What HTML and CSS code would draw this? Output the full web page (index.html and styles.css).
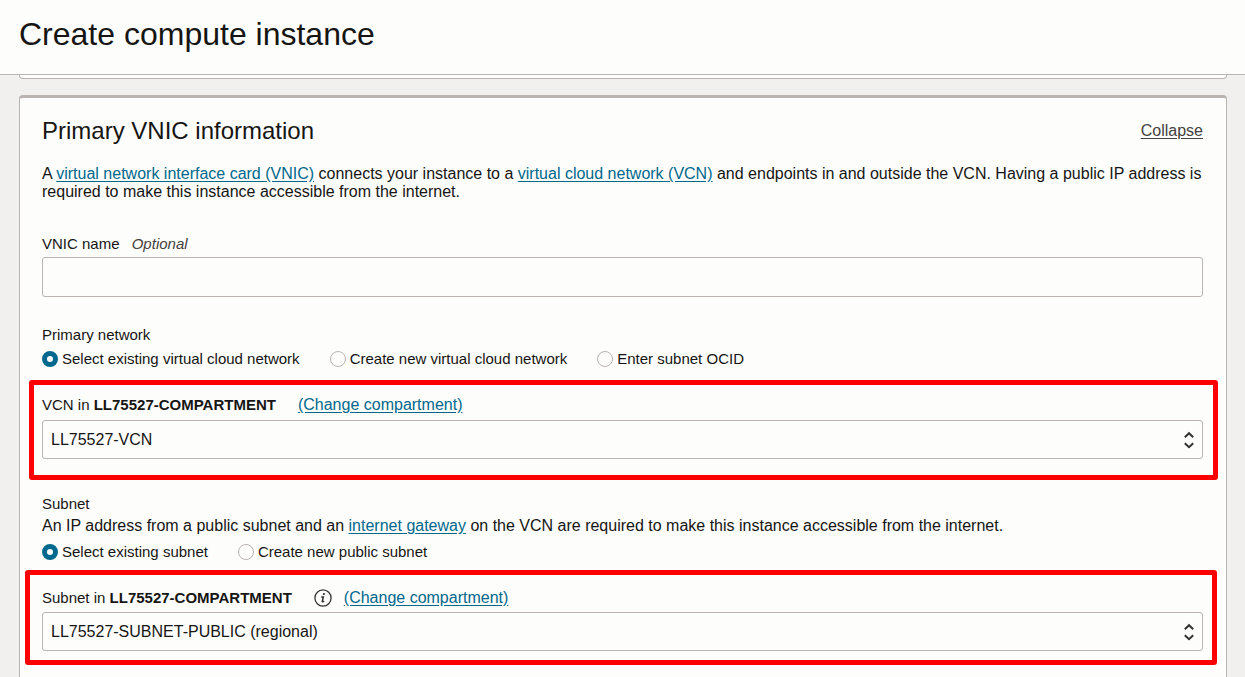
FILE: index.html
```html
<!DOCTYPE html>
<html lang="en">
<head>
<meta charset="utf-8">
<title>Create compute instance</title>
<link rel="stylesheet" href="styles.css">
</head>
<body>
<header class="page-header">
  <h1 class="page-title">Create compute instance</h1>
</header>
<main class="content">
  <section class="previous-panel" aria-hidden="true"></section>
  <form class="panel">
    <div class="panel-heading">
      <h2 class="panel-title">Primary VNIC information</h2>
      <a class="collapse" href="#">Collapse</a>
    </div>
    <p class="intro">A <a href="#">virtual network interface card (VNIC)</a> connects your instance to a <a href="#">virtual cloud network (VCN)</a> and endpoints in and outside the VCN. Having a public IP address is required to make this instance accessible from the internet.</p>

    <div class="field field-name">
      <label class="label" for="vnic-name">VNIC name <em class="optional">Optional</em></label>
      <input class="control" id="vnic-name" type="text">
    </div>

    <fieldset class="group">
      <legend class="label">Primary network</legend>
      <div class="options">
        <label class="option"><input class="radio" type="radio" name="network" checked>Select existing virtual cloud network</label>
        <label class="option"><input class="radio" type="radio" name="network">Create new virtual cloud network</label>
        <label class="option"><input class="radio" type="radio" name="network">Enter subnet OCID</label>
      </div>
    </fieldset>

    <div class="field field-vcn">
      <div class="label-row">
        <label class="label" for="vcn">VCN in <strong>LL75527-COMPARTMENT</strong></label>
        <a href="#">(Change compartment)</a>
      </div>
      <div class="select-wrap">
        <select class="control select" id="vcn"><option>LL75527-VCN</option></select>
        <svg class="chevrons" viewBox="0 0 12 18" aria-hidden="true"><path d="M1.8 6.2 6 2.2l4.2 4M1.8 12.2l4.2 4 4.2-4"/></svg>
      </div>
      <div class="highlight highlight-vcn"></div>
    </div>

    <fieldset class="group group-subnet">
      <legend class="label">Subnet</legend>
      <p class="hint">An IP address from a public subnet and an <a href="#">internet gateway</a> on the VCN are required to make this instance accessible from the internet.</p>
      <div class="options">
        <label class="option"><input class="radio" type="radio" name="subnet" checked>Select existing subnet</label>
        <label class="option"><input class="radio" type="radio" name="subnet">Create new public subnet</label>
      </div>
    </fieldset>

    <div class="field field-subnet">
      <div class="label-row">
        <label class="label" for="subnet">Subnet in <strong>LL75527-COMPARTMENT</strong></label>
        <button class="info" type="button" aria-label="More information">
          <svg viewBox="0 0 18 18" aria-hidden="true"><circle cx="9" cy="9" r="8.1" fill="none" stroke="#333" stroke-width="1.3"/><circle cx="9.9" cy="5" r="1.1" fill="#333"/><path d="M7.2 8h2.1l-1.1 4.6q0 .5 2-.5" fill="none" stroke="#333" stroke-width="1.5"/></svg>
        </button>
        <a href="#">(Change compartment)</a>
      </div>
      <div class="select-wrap">
        <select class="control select" id="subnet"><option>LL75527-SUBNET-PUBLIC (regional)</option></select>
        <svg class="chevrons" viewBox="0 0 12 18" aria-hidden="true"><path d="M1.8 6.2 6 2.2l4.2 4M1.8 12.2l4.2 4 4.2-4"/></svg>
      </div>
      <div class="highlight highlight-subnet"></div>
    </div>
  </form>
</main>
</body>
</html>
```
FILE: styles.css
```css
* {
  box-sizing: border-box;
}

body {
  margin: 0;
  min-height: 100vh;
  display: flex;
  flex-direction: column;
  background: #f2f0ef;
  color: #161513;
  font-family: "Liberation Sans", Arial, sans-serif;
  font-size: 16px;
  line-height: 18px;
}

h1, h2, p {
  margin: 0;
  font-weight: 400;
}

a {
  color: #00688c;
  text-underline-offset: 2px;
}

.page-header {
  padding: 16px 19px 22px;
  border-bottom: 1px solid #b9b4b0;
  background: #fdfdfc;
}

.page-title {
  font-size: 32px;
  line-height: 36px;
}

.content {
  flex: 1;
  display: flex;
  flex-direction: column;
  gap: 16px;
  padding: 0 18px 0 19px;
}

.previous-panel {
  height: 4px;
  border: 1px solid #b9b4b0;
  border-top: 0;
  border-radius: 0 0 4px 4px;
  background: #fdfdfc;
}

.panel {
  flex: 1;
  padding: 19px 23px 26px 22px;
  border: 1px solid #b9b4b0;
  border-top-width: 3px;
  border-bottom: 0;
  border-radius: 4px 4px 0 0;
  background: #fdfdfc;
}

.panel-heading {
  display: flex;
  justify-content: space-between;
  align-items: center;
}

.panel-title {
  font-size: 24px;
  line-height: 28px;
}

.collapse {
  color: #45413c;
}

.intro {
  margin-top: 20px;
}

.field {
  position: relative;
  display: flex;
  flex-direction: column;
  gap: 6px;
  margin-top: 28px;
}

.field-name {
  gap: 4px;
  margin-top: 34px;
}

.field-subnet {
  gap: 5px;
}

.label {
  padding: 0;
  font-size: 15px;
}

.optional {
  margin-left: 8px;
  color: #45413c;
}

.control {
  width: 100%;
  height: 40px;
  padding: 0 8px;
  border: 1px solid #b9b4b0;
  border-radius: 3px;
  background: #fdfdfc;
  color: inherit;
  font: inherit;
}

.group {
  min-width: 0;
  margin: 29px 0 0;
  padding: 0;
  border: 0;
}

.group-subnet {
  margin-top: 36px;
}

.hint {
  margin: 4px 0 8px;
}

.options {
  display: flex;
  gap: 30px;
  margin-top: 6px;
}

.option {
  display: flex;
  align-items: center;
  gap: 4px;
  font-size: 15px;
}

.radio {
  appearance: none;
  width: 16px;
  height: 16px;
  margin: 0;
  border: 1px solid #b9b4b0;
  border-radius: 50%;
  background: #fdfdfc;
}

.radio:checked {
  border: 5px solid #00688c;
}

.label-row {
  display: flex;
  align-items: center;
  gap: 12px;
}

.label-row .label {
  margin-right: 10px;
}

.select-wrap {
  position: relative;
}

.select {
  display: block;
  height: 39px;
  appearance: none;
}

.chevrons {
  position: absolute;
  top: 11px;
  right: 8px;
  width: 12px;
  height: 18px;
  fill: none;
  stroke: #333;
  stroke-width: 2;
  pointer-events: none;
}

.info {
  width: 18px;
  height: 18px;
  padding: 0;
  border: 0;
  background: none;
}

.info svg {
  display: block;
}

.highlight {
  position: absolute;
  border: 5px solid #f00;
  border-radius: 3px;
  pointer-events: none;
}

.highlight-vcn {
  inset: -16px -15px -21px -13px;
}

.highlight-subnet {
  inset: -19px -14px -14px -17px;
}
```
